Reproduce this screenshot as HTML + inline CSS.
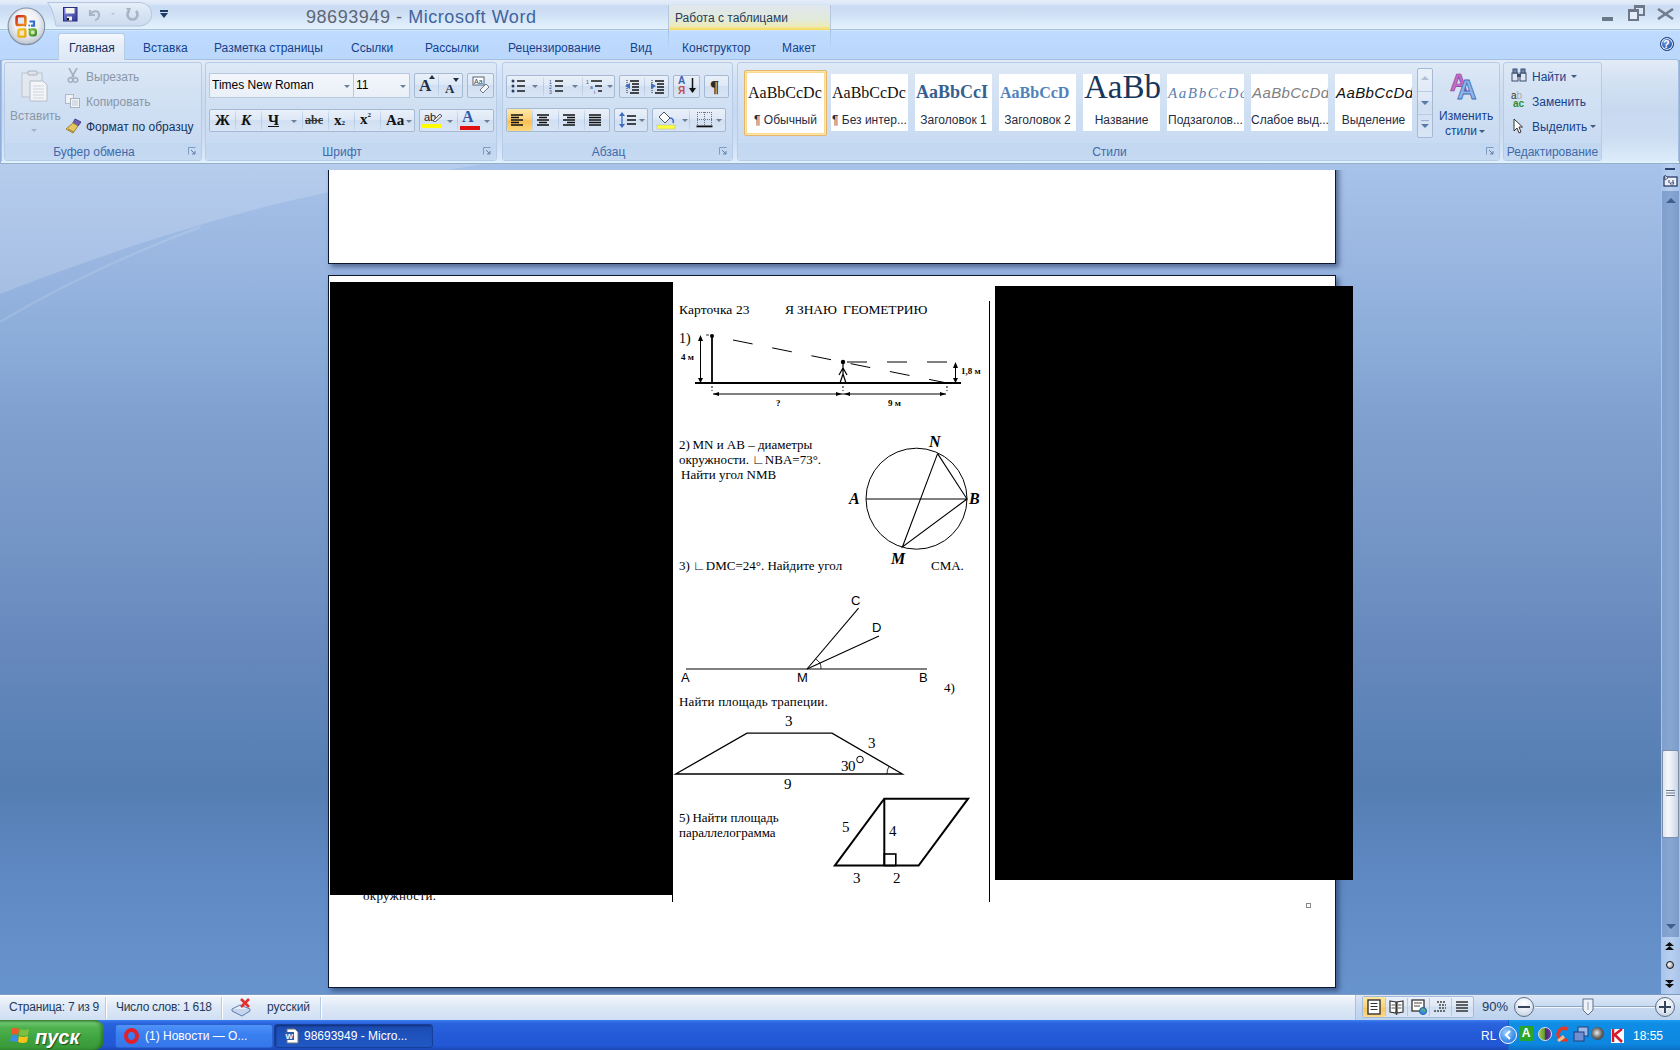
<!DOCTYPE html>
<html><head><meta charset="utf-8">
<style>
*{margin:0;padding:0;box-sizing:border-box}
html,body{width:1680px;height:1050px;overflow:hidden;background:#8fb0dc;font-family:"Liberation Sans",sans-serif}
.a{position:absolute}
.t{position:absolute;white-space:nowrap;color:#15428b;font-size:12px;line-height:14px}
#title{left:0;top:0;width:1680px;height:30px;background:linear-gradient(#e4edf9 0px,#dde8f7 4px,#c9dbf2 6px,#cfe0f5 14px,#dbeafa 22px,#e4f2fd 29px)}
#tabs{left:0;top:30px;width:1680px;height:30px;background:linear-gradient(#bfdbfe,#bad7fc)}
#ribbon{left:1px;top:59px;width:1678px;height:104px;background:linear-gradient(#e3ebf6 0%,#d3e1f3 20%,#c7d9f0 50%,#cddef3 78%,#ddecfa 100%);border:1px solid #a4bfe2;border-radius:3px}
#work{left:0;top:163px;width:1680px;height:832px;background:linear-gradient(#a8c3ea 0%,#9bb8e2 10%,#8fafdb 19%,#82a3d2 29%,#7a9bca 38%,#7193c4 48%,#6889bd 57%,#5d83b8 67%,#557eb3 75%,#5f89c3 86%,#6894ce 100%);overflow:hidden}
#status{left:0;top:995px;width:1680px;height:25px;background:linear-gradient(#f1f6fc 0%,#e0eaf7 40%,#cfdff3 100%);border-top:1px solid #ffffff}
#taskbar{left:0;top:1020px;width:1680px;height:30px;background:linear-gradient(#3d7ff2 0%,#2a64de 10%,#245ad8 50%,#2257d6 85%,#1b47b5 100%)}
.page{position:absolute;background:#fff;border:1px solid #0b1830;box-shadow:3px 3px 5px rgba(30,50,90,.6)}
.blk{position:absolute;background:#000}
.grp{position:absolute;top:62px;height:99px;border:1px solid #b5cbe7;border-radius:3px;background:linear-gradient(#dfe9f6 0%,#d5e3f4 20%,#c9dbf2 80%,#d0e1f5 100%)}
.glab{position:absolute;left:0;right:0;padding-right:18px;bottom:0;height:18px;padding-top:1px;background:linear-gradient(#c2d7f0,#c6daf2);border-top:1px solid #c8dcf2;text-align:center;color:#3e6aaa;font-size:12px;line-height:16px}
.btnbox{position:absolute;border:1px solid #a6b9d3;border-radius:2px;background:linear-gradient(#e9f0f9 0%,#dfe8f6 45%,#d1dff2 50%,#d8e5f5 100%)}
.serif{font-family:"Liberation Serif",serif;color:#000;position:absolute;white-space:nowrap}
</style></head><body>
<div id="title" class="a"></div>
<div id="tabs" class="a"></div>
<div id="ribbon" class="a"></div>
<div id="work" class="a"></div>
<svg class="a" style="left:0;top:163px" width="700" height="200" viewBox="0 0 700 200">
<path d="M0,131 C60,108 200,55 330,29 S520,-5 600,-15 L0,-15 Z" fill="rgba(255,255,255,0.17)"/>
<path d="M0,159 C40,135 100,102 200,64" stroke="rgba(255,255,255,0.12)" stroke-width="2.5" fill="none"/>
</svg>
<div id="status" class="a"></div>
<div id="taskbar" class="a"></div>


<!-- TITLE BAR -->
<div class="a" style="left:0;top:29px;width:1680px;height:1px;background:#a6c1dd"></div>
<div class="a" style="left:0;top:30px;width:1680px;height:1px;background:#d0e6fd"></div>
<!-- QAT pill -->
<svg class="a" style="left:0;top:0" width="170" height="30" viewBox="0 0 170 30"><defs><linearGradient id="qp" x1="0" y1="0" x2="0" y2="1"><stop offset="0" stop-color="#e6eef9"/><stop offset="0.6" stop-color="#d5e2f3"/><stop offset="1" stop-color="#cddbef"/></linearGradient></defs>
<path d="M47.5,2.5 L140,2.5 A11.75,11.75 0 0 1 140,26 L56,26 Q53,8 47.5,2.5 Z" fill="url(#qp)" stroke="#b3c6df" stroke-width="1"/></svg>
<!-- save icon -->
<svg class="a" style="left:63px;top:7px" width="15" height="15" viewBox="0 0 15 15"><defs><linearGradient id="sv" x1="0" y1="0" x2="1" y2="1"><stop offset="0" stop-color="#8a8ee8"/><stop offset="1" stop-color="#2f3590"/></linearGradient></defs><rect x="0.5" y="0.5" width="13.5" height="13.5" fill="url(#sv)" stroke="#2a2f7c"/><rect x="2.5" y="1" width="9" height="5.5" fill="#f6f6e8"/><rect x="4" y="9.5" width="5" height="4" fill="#f0f0f0"/><rect x="4" y="11" width="2" height="2.5" fill="#111"/></svg>
<!-- undo -->
<svg class="a" style="left:87px;top:7px" width="16" height="15" viewBox="0 0 16 15"><path d="M3,3 L3,8 L8,8 M3,8 C6,3 12,3 12,8 C12,11 10,13 8,13" stroke="#a9b6c8" stroke-width="2.2" fill="none"/></svg>
<div class="a" style="left:111px;top:13px;width:0;height:0;border-left:2px solid transparent;border-right:2px solid transparent;border-top:2px solid #b8c3d3"></div>
<svg class="a" style="left:125px;top:7px" width="15" height="15" viewBox="0 0 15 15"><path d="M4,4 A5,5 0 1 0 11,4" stroke="#a9b4c4" stroke-width="2.6" fill="none"/><path d="M1,1 L6,1 L4,6Z" fill="#a9b4c4"/></svg>
<!-- customize arrow -->
<div class="a" style="left:160px;top:10px;width:8px;height:2px;background:#1f3b63"></div>
<div class="a" style="left:160px;top:13px;width:0;height:0;border-left:4px solid transparent;border-right:4px solid transparent;border-top:5px solid #1f3b63"></div>
<!-- office button -->
<svg class="a" style="left:0;top:0" width="52" height="52" viewBox="0 0 52 52">
<defs>
<radialGradient id="ob" cx="50%" cy="40%" r="60%"><stop offset="0" stop-color="#ffffff"/><stop offset="0.55" stop-color="#eef0f4"/><stop offset="0.85" stop-color="#cdd3dc"/><stop offset="1" stop-color="#b9c2ce"/></radialGradient>
<linearGradient id="og" x1="0" y1="0" x2="1" y2="1"><stop offset="0" stop-color="#c8261a"/><stop offset="1" stop-color="#f39a1c"/></linearGradient>
<linearGradient id="yg" x1="0" y1="0" x2="1" y2="1"><stop offset="0" stop-color="#f5c21a"/><stop offset="1" stop-color="#e8a812"/></linearGradient>
<linearGradient id="gg" x1="0" y1="0" x2="1" y2="1"><stop offset="0" stop-color="#7cc04a"/><stop offset="1" stop-color="#3e8a26"/></linearGradient>
</defs>
<circle cx="26.4" cy="26.3" r="18.3" fill="url(#ob)" stroke="#8391a4" stroke-width="1.1"/>
<rect x="16.6" y="16.2" width="8.8" height="8.8" rx="1.6" fill="#dfe8f3" stroke="url(#og)" stroke-width="2.6"/>
<path d="M29.5,21.5 H34 V25.6 H31" fill="none" stroke="#2f6fd0" stroke-width="2.2"/>
<rect x="18.4" y="29.4" width="7" height="7.2" rx="1.4" fill="#f6e6c0" stroke="url(#yg)" stroke-width="2.4"/>
<rect x="29.8" y="29.4" width="6" height="6" rx="1.8" fill="#cfeab0" stroke="url(#gg)" stroke-width="2.4"/>
<circle cx="25.3" cy="25.5" r="0.9" fill="#c85a2a"/><circle cx="29.2" cy="25.5" r="0.9" fill="#2f6fd0"/>
<circle cx="25.3" cy="29.3" r="0.9" fill="#e0a818"/><circle cx="29.2" cy="29.3" r="0.9" fill="#4e9a30"/>
</svg>
<!-- title -->
<div class="t" style="left:306px;top:7px;font-size:18px;line-height:20px;letter-spacing:0.55px;color:#5e6672">98693949 - <span style="color:#3f649e">Microsoft Word</span></div>
<!-- contextual header -->
<div class="a" style="left:668px;top:5px;width:163px;height:25px;background:linear-gradient(#dfe7ef 0%,#e2ead9 60%,#eeebb8 85%,#f7d94a 100%);border-left:1px solid #b5c8de;border-right:1px solid #b5c8de"></div>
<div class="t" style="left:675px;top:11px;color:#283c58">Работа с таблицами</div>
<div class="a" style="left:668px;top:30px;width:1px;height:20px;background:linear-gradient(#a8bedb,rgba(168,190,219,0))"></div>
<div class="a" style="left:830px;top:30px;width:1px;height:20px;background:linear-gradient(#a8bedb,rgba(168,190,219,0))"></div>
<!-- window controls -->
<div class="a" style="left:1602px;top:17px;width:11px;height:4px;background:#6c7889"></div>
<div class="a" style="left:1634px;top:5px;width:11px;height:11px;border:2px solid #6c7889;border-top-width:3px;background:#dbe6f5"></div>
<div class="a" style="left:1628px;top:9px;width:11px;height:12px;border:2px solid #6c7889;border-top-width:3px;background:#e4edf9"></div>
<svg class="a" style="left:1657px;top:8px" width="17" height="12" viewBox="0 0 17 12"><path d="M1,1 L16,11 M16,1 L1,11" stroke="#727e90" stroke-width="2.6"/></svg>
<!-- TABS -->
<div class="a" style="left:58px;top:33px;width:67px;height:27px;border:1px solid #b6cbe6;border-bottom:none;border-radius:3px 3px 0 0;background:linear-gradient(#f4f8fd 0%,#e7eef9 40%,#dde7f5 100%)"></div>
<div class="t" style="left:69px;top:41px;color:#15335e">Главная</div>
<div class="t" style="left:143px;top:41px">Вставка</div>
<div class="t" style="left:214px;top:41px">Разметка страницы</div>
<div class="t" style="left:351px;top:41px">Ссылки</div>
<div class="t" style="left:425px;top:41px">Рассылки</div>
<div class="t" style="left:508px;top:41px">Рецензирование</div>
<div class="t" style="left:630px;top:41px">Вид</div>
<div class="t" style="left:682px;top:41px">Конструктор</div>
<div class="t" style="left:782px;top:41px">Макет</div>
<!-- help -->
<div class="a" style="left:1660px;top:37px;width:14px;height:14px;border-radius:50%;background:radial-gradient(circle at 40% 35%,#6fa0e6,#1d4fa8 70%,#163c82);border:1px solid #1a3a78;box-shadow:0 0 0 1px #fff inset"></div>
<div class="t" style="left:1663px;top:37px;font-size:11px;font-weight:bold;color:#fff">?</div>

<!-- RIBBON -->
<div class="a" style="left:1px;top:161px;width:1678px;height:2px;background:#dff2fb"></div>
<div class="a" style="left:0;top:163px;width:1680px;height:1px;background:#96b0cc"></div>
<div class="grp" style="left:4px;width:198px"><div class="glab">Буфер обмена</div></div>
<svg class="a" style="left:188px;top:147px" width="8" height="8" viewBox="0 0 8 8"><path d="M0.5,7.5 L0.5,0.5 L7.5,0.5" stroke="#7f9bc0" fill="none"/><path d="M3,3 L7,7 M7,4 L7,7 L4,7" stroke="#5e7ea8" fill="none"/></svg>
<svg class="a" style="left:20px;top:69px" width="30" height="33" viewBox="0 0 30 33">
<rect x="2" y="4" width="20" height="24" fill="#e3e8ef" stroke="#b9c3cf"/>
<rect x="8" y="2" width="9" height="4" rx="1" fill="#dfe4ea" stroke="#a9b3bf"/>
<path d="M10,12 L23,12 L27,16 L27,32 L10,32 Z" fill="#f3f5f8" stroke="#b4bdc8"/>
<path d="M13,17 H24 M13,20 H24 M13,23 H24 M13,26 H24 M13,29 H24" stroke="#d0d6de"/>
</svg>
<div class="t" style="left:10px;top:109px;color:#8a97a6">Вставить</div>
<div class="a" style="left:31px;top:129px;width:0;height:0;border-left:3px solid transparent;border-right:3px solid transparent;border-top:3px solid #a7b2c0"></div>
<svg class="a" style="left:67px;top:68px" width="12" height="15" viewBox="0 0 12 15"><path d="M2,0 L7,9 M10,0 L5,9" stroke="#a4afbd" stroke-width="1.6"/><circle cx="3.5" cy="12" r="2.3" fill="none" stroke="#a4afbd" stroke-width="1.5"/><circle cx="8.5" cy="12" r="2.3" fill="none" stroke="#a4afbd" stroke-width="1.5"/></svg>
<div class="t" style="left:86px;top:70px;color:#8a97a6">Вырезать</div>
<svg class="a" style="left:65px;top:94px" width="16" height="14" viewBox="0 0 16 14"><rect x="0.5" y="0.5" width="8" height="9" fill="#eef1f5" stroke="#b0bac6"/><rect x="5.5" y="4.5" width="9" height="9" fill="#f3f5f8" stroke="#a8b2bf"/><path d="M7,7 H13 M7,9 H13 M7,11 H13" stroke="#bcc5cf"/></svg>
<div class="t" style="left:86px;top:95px;color:#8a97a6">Копировать</div>
<svg class="a" style="left:65px;top:118px" width="17" height="16" viewBox="0 0 17 16"><path d="M10,1 L16,4 L13,8 L8,5 Z" fill="#6a5fb2" stroke="#4a3f8a"/><path d="M8,5 L13,8 L8,15 L1,11 Z" fill="#e7c763" stroke="#9d8431"/><path d="M3,11 L9,14" stroke="#9d8431"/></svg>
<div class="t" style="left:86px;top:120px;color:#15335e">Формат по образцу</div>
<div class="grp" style="left:205px;width:292px"><div class="glab">Шрифт</div></div>
<svg class="a" style="left:483px;top:147px" width="8" height="8" viewBox="0 0 8 8"><path d="M0.5,7.5 L0.5,0.5 L7.5,0.5" stroke="#7f9bc0" fill="none"/><path d="M3,3 L7,7 M7,4 L7,7 L4,7" stroke="#5e7ea8" fill="none"/></svg>
<div class="a" style="left:209px;top:73px;width:145px;height:25px;border:1px solid #b6c9e1;background:linear-gradient(#f2f6fb,#eaf0f8)"></div>
<div class="t" style="left:212px;top:78px;color:#000">Times New Roman</div>
<div class="a" style="left:344px;top:85px;width:0;height:0;border-left:3px solid transparent;border-right:3px solid transparent;border-top:3px solid #6b7f99"></div>
<div class="a" style="left:353px;top:73px;width:57px;height:25px;border:1px solid #b6c9e1;background:linear-gradient(#f2f6fb,#eaf0f8)"></div>
<div class="t" style="left:356px;top:78px;color:#000">11</div>
<div class="a" style="left:400px;top:85px;width:0;height:0;border-left:3px solid transparent;border-right:3px solid transparent;border-top:3px solid #6b7f99"></div>
<div class="btnbox" style="left:414px;top:73px;width:49px;height:25px"></div>
<div class="a" style="left:438px;top:75px;width:1px;height:21px;background:linear-gradient(rgba(170,192,222,0.3),#b4c9e4,rgba(170,192,222,0.3))"></div>
<div class="serif" style="left:419px;top:76px;font-size:17px;font-weight:bold;color:#1d2e45">A</div>
<svg class="a" style="left:429px;top:75px" width="6" height="4"><path d="M0,4 L3,0 L6,4Z" fill="#1d2e45"/></svg>
<div class="serif" style="left:445px;top:81px;font-size:13px;font-weight:bold;color:#1d2e45">A</div>
<svg class="a" style="left:453px;top:78px" width="6" height="4"><path d="M0,0 L3,4 L6,0Z" fill="#1d2e45"/></svg>
<div class="btnbox" style="left:467px;top:73px;width:27px;height:25px"></div>
<svg class="a" style="left:472px;top:76px" width="18" height="18" viewBox="0 0 18 18"><rect x="1" y="1" width="11" height="8" fill="#fff" stroke="#55657a"/><text x="2" y="8" font-size="7" font-family="Liberation Sans" fill="#2b3d55">Aa</text><path d="M8,14 L14,8 L17,11 L11,17 Z" fill="#f6f6f6" stroke="#6b7a8e"/></svg>
<div class="btnbox" style="left:209px;top:109px;width:206px;height:23px"></div>
<div class="a" style="left:235px;top:111px;width:1px;height:19px;background:linear-gradient(rgba(170,192,222,0.3),#b4c9e4,rgba(170,192,222,0.3))"></div>
<div class="a" style="left:261px;top:111px;width:1px;height:19px;background:linear-gradient(rgba(170,192,222,0.3),#b4c9e4,rgba(170,192,222,0.3))"></div>
<div class="a" style="left:302px;top:111px;width:1px;height:19px;background:linear-gradient(rgba(170,192,222,0.3),#b4c9e4,rgba(170,192,222,0.3))"></div>
<div class="a" style="left:328px;top:111px;width:1px;height:19px;background:linear-gradient(rgba(170,192,222,0.3),#b4c9e4,rgba(170,192,222,0.3))"></div>
<div class="a" style="left:354px;top:111px;width:1px;height:19px;background:linear-gradient(rgba(170,192,222,0.3),#b4c9e4,rgba(170,192,222,0.3))"></div>
<div class="a" style="left:380px;top:111px;width:1px;height:19px;background:linear-gradient(rgba(170,192,222,0.3),#b4c9e4,rgba(170,192,222,0.3))"></div>
<div class="serif" style="left:215px;top:112px;font-size:15px;font-weight:bold;color:#111">Ж</div>
<div class="serif" style="left:241px;top:112px;font-size:15px;font-weight:bold;font-style:italic;color:#111">К</div>
<div class="serif" style="left:268px;top:112px;font-size:15px;font-weight:bold;color:#111;text-decoration:underline">Ч</div>
<div class="a" style="left:291px;top:120px;width:0;height:0;border-left:3px solid transparent;border-right:3px solid transparent;border-top:3px solid #6b7f99"></div>
<div class="serif" style="left:305px;top:113px;font-size:12px;font-weight:bold;color:#333;text-decoration:line-through">abc</div>
<div class="serif" style="left:334px;top:112px;font-size:15px;font-weight:bold;color:#111">x<span style="font-size:7px">2</span></div>
<div class="serif" style="left:360px;top:111px;font-size:15px;font-weight:bold;color:#111">x<span style="font-size:7px;vertical-align:top">2</span></div>
<div class="serif" style="left:386px;top:112px;font-size:15px;font-weight:bold;color:#111">Aa</div>
<div class="a" style="left:406px;top:120px;width:0;height:0;border-left:3px solid transparent;border-right:3px solid transparent;border-top:3px solid #6b7f99"></div>
<div class="btnbox" style="left:419px;top:109px;width:75px;height:23px"></div>
<div class="a" style="left:457px;top:111px;width:1px;height:19px;background:linear-gradient(rgba(170,192,222,0.3),#b4c9e4,rgba(170,192,222,0.3))"></div>
<div class="t" style="left:424px;top:110px;font-size:11px;color:#222">ab</div>
<svg class="a" style="left:431px;top:112px" width="12" height="10"><path d="M2,9 L9,2 L11,4 L4,10Z" fill="#e8edf5" stroke="#556"/></svg>
<div class="a" style="left:422px;top:124px;width:20px;height:4px;background:#ffff00"></div>
<div class="a" style="left:447px;top:120px;width:0;height:0;border-left:3px solid transparent;border-right:3px solid transparent;border-top:3px solid #6b7f99"></div>
<div class="t" style="left:462px;top:110px;font-size:16px;font-weight:bold;color:#2d57a8;font-family:Liberation Serif">A</div>
<div class="a" style="left:460px;top:126px;width:20px;height:4px;background:#e01010"></div>
<div class="a" style="left:484px;top:120px;width:0;height:0;border-left:3px solid transparent;border-right:3px solid transparent;border-top:3px solid #6b7f99"></div>
<div class="grp" style="left:502px;width:231px"><div class="glab">Абзац</div></div>
<svg class="a" style="left:719px;top:147px" width="8" height="8" viewBox="0 0 8 8"><path d="M0.5,7.5 L0.5,0.5 L7.5,0.5" stroke="#7f9bc0" fill="none"/><path d="M3,3 L7,7 M7,4 L7,7 L4,7" stroke="#5e7ea8" fill="none"/></svg>
<div class="btnbox" style="left:506px;top:75px;width:109px;height:23px"></div>
<div class="a" style="left:543px;top:77px;width:1px;height:19px;background:linear-gradient(rgba(170,192,222,0.3),#b4c9e4,rgba(170,192,222,0.3))"></div>
<div class="a" style="left:582px;top:77px;width:1px;height:19px;background:linear-gradient(rgba(170,192,222,0.3),#b4c9e4,rgba(170,192,222,0.3))"></div>
<svg class="a" style="left:511px;top:79px" width="16" height="15" viewBox="0 0 16 15"><circle cx="2" cy="2" r="1.5" fill="#2a3e5c"/><circle cx="2" cy="7" r="1.5" fill="#2a3e5c"/><circle cx="2" cy="12" r="1.5" fill="#2a3e5c"/><path d="M6,2 H14 M6,7 H14 M6,12 H14" stroke="#1a1a1a" stroke-width="1.4"/></svg>
<div class="a" style="left:532px;top:85px;width:0;height:0;border-left:3px solid transparent;border-right:3px solid transparent;border-top:3px solid #6b7f99"></div>
<svg class="a" style="left:549px;top:79px" width="16" height="15" viewBox="0 0 16 15"><text x="0" y="5" font-size="5" fill="#2c4f8f" font-family="Liberation Sans">1</text><text x="0" y="10" font-size="5" fill="#2c4f8f" font-family="Liberation Sans">2</text><text x="0" y="15" font-size="5" fill="#2c4f8f" font-family="Liberation Sans">3</text><path d="M6,2 H14 M6,7 H14 M6,12 H14" stroke="#1a1a1a" stroke-width="1.4"/></svg>
<div class="a" style="left:572px;top:85px;width:0;height:0;border-left:3px solid transparent;border-right:3px solid transparent;border-top:3px solid #6b7f99"></div>
<svg class="a" style="left:586px;top:79px" width="18" height="15" viewBox="0 0 18 15"><text x="0" y="5" font-size="5" fill="#2c4f8f" font-family="Liberation Sans">1</text><text x="4" y="10" font-size="5" fill="#2c4f8f" font-family="Liberation Sans">a</text><text x="8" y="15" font-size="5" fill="#2c4f8f" font-family="Liberation Sans">i</text><path d="M5,2 H16 M9,7 H16 M12,12 H16" stroke="#1a1a1a" stroke-width="1.4"/></svg>
<div class="a" style="left:607px;top:85px;width:0;height:0;border-left:3px solid transparent;border-right:3px solid transparent;border-top:3px solid #6b7f99"></div>
<div class="btnbox" style="left:619px;top:75px;width:50px;height:23px"></div>
<div class="a" style="left:644px;top:77px;width:1px;height:19px;background:linear-gradient(rgba(170,192,222,0.3),#b4c9e4,rgba(170,192,222,0.3))"></div>
<svg class="a" style="left:624px;top:79px" width="16" height="15" viewBox="0 0 16 15"><path d="M3,1 V14" stroke="#222" stroke-dasharray="1 1" fill="none"/><path d="M6,2 H15 M8,5 H15 M8,8 H15 M8,11 H15 M6,14 H15" stroke="#111" stroke-width="1.3"/><path d="M1,7 L6,4 L6,10Z" fill="#3d6bc0"/></svg>
<svg class="a" style="left:649px;top:79px" width="16" height="15" viewBox="0 0 16 15"><path d="M3,1 V14" stroke="#222" stroke-dasharray="1 1" fill="none"/><path d="M6,2 H15 M8,5 H15 M8,8 H15 M8,11 H15 M6,14 H15" stroke="#111" stroke-width="1.3"/><path d="M7,7 L2,4 L2,10Z" fill="#3d6bc0"/></svg>
<div class="btnbox" style="left:673px;top:75px;width:27px;height:23px"></div>
<div class="t" style="left:678px;top:76px;font-size:10px;line-height:10px;color:#3a62b0;font-weight:bold">A</div>
<div class="t" style="left:678px;top:86px;font-size:10px;line-height:10px;color:#c0504d;font-weight:bold">Я</div>
<svg class="a" style="left:689px;top:78px" width="7" height="16"><path d="M3.5,0 V14" stroke="#111" stroke-width="1.5"/><path d="M0,10 L3.5,15 L7,10Z" fill="#111"/></svg>
<div class="btnbox" style="left:704px;top:75px;width:25px;height:23px"></div>
<div class="serif" style="left:710px;top:77px;font-size:17px;font-weight:bold;color:#2a2a2a">¶</div>
<div class="btnbox" style="left:506px;top:108px;width:104px;height:24px"></div>
<div class="a" style="left:532px;top:110px;width:1px;height:20px;background:linear-gradient(rgba(170,192,222,0.3),#b4c9e4,rgba(170,192,222,0.3))"></div>
<div class="a" style="left:558px;top:110px;width:1px;height:20px;background:linear-gradient(rgba(170,192,222,0.3),#b4c9e4,rgba(170,192,222,0.3))"></div>
<div class="a" style="left:584px;top:110px;width:1px;height:20px;background:linear-gradient(rgba(170,192,222,0.3),#b4c9e4,rgba(170,192,222,0.3))"></div>
<div class="a" style="left:507px;top:109px;width:25px;height:22px;background:linear-gradient(#fde8a6,#fbd27b 45%,#f9bf52 55%,#fcd97f)"></div>
<svg class="a" style="left:511px;top:114px" width="14" height="13"><path d="M0,1.0 H12 M0,3.5 H8 M0,6.0 H12 M0,8.5 H8 M0,11.0 H12 " stroke="#111" stroke-width="1.3"/></svg>
<svg class="a" style="left:537px;top:114px" width="14" height="13"><path d="M0,1.0 H12 M2,3.5 H10 M0,6.0 H12 M2,8.5 H10 M0,11.0 H12 " stroke="#111" stroke-width="1.3"/></svg>
<svg class="a" style="left:563px;top:114px" width="14" height="13"><path d="M0,1.0 H12 M4,3.5 H12 M0,6.0 H12 M4,8.5 H12 M0,11.0 H12 " stroke="#111" stroke-width="1.3"/></svg>
<svg class="a" style="left:589px;top:114px" width="14" height="13"><path d="M0,1.0 H12 M0,3.5 H12 M0,6.0 H12 M0,8.5 H12 M0,11.0 H12 " stroke="#111" stroke-width="1.3"/></svg>
<div class="btnbox" style="left:614px;top:108px;width:34px;height:24px"></div>
<svg class="a" style="left:619px;top:111px" width="18" height="18" viewBox="0 0 18 18"><path d="M3,2 V16" stroke="#3d6bc0" stroke-width="1.3"/><path d="M0,5 L3,1 L6,5Z M0,13 L3,17 L6,13Z" fill="#3d6bc0"/><path d="M8,5 H17 M8,9 H17 M8,13 H17" stroke="#111" stroke-width="1.4"/></svg>
<div class="a" style="left:639px;top:119px;width:0;height:0;border-left:3px solid transparent;border-right:3px solid transparent;border-top:3px solid #6b7f99"></div>
<div class="btnbox" style="left:652px;top:108px;width:74px;height:24px"></div>
<div class="a" style="left:689px;top:110px;width:1px;height:20px;background:linear-gradient(rgba(170,192,222,0.3),#b4c9e4,rgba(170,192,222,0.3))"></div>
<svg class="a" style="left:656px;top:110px" width="22" height="20" viewBox="0 0 22 20"><path d="M8,2 L14,8 L9,13 L3,7 Z" fill="#fff" stroke="#4a5466"/><path d="M14,8 C17,8 18,11 17,13" stroke="#3d6bc0" stroke-width="1.6" fill="none"/><rect x="1" y="15" width="18" height="4" fill="#ffff40" stroke="#b3b38c" stroke-width="0.5"/></svg>
<div class="a" style="left:682px;top:119px;width:0;height:0;border-left:3px solid transparent;border-right:3px solid transparent;border-top:3px solid #6b7f99"></div>
<svg class="a" style="left:696px;top:111px" width="17" height="17" viewBox="0 0 17 17"><rect x="1" y="1" width="1" height="1" fill="#6b7280"/><rect x="1" y="1" width="1" height="1" fill="#6b7280"/><rect x="15" y="1" width="1" height="1" fill="#6b7280"/><rect x="8" y="1" width="1" height="1" fill="#6b7280"/><rect x="1" y="8" width="1" height="1" fill="#6b7280"/><rect x="3" y="1" width="1" height="1" fill="#6b7280"/><rect x="1" y="3" width="1" height="1" fill="#6b7280"/><rect x="15" y="3" width="1" height="1" fill="#6b7280"/><rect x="8" y="3" width="1" height="1" fill="#6b7280"/><rect x="3" y="8" width="1" height="1" fill="#6b7280"/><rect x="5" y="1" width="1" height="1" fill="#6b7280"/><rect x="1" y="5" width="1" height="1" fill="#6b7280"/><rect x="15" y="5" width="1" height="1" fill="#6b7280"/><rect x="8" y="5" width="1" height="1" fill="#6b7280"/><rect x="5" y="8" width="1" height="1" fill="#6b7280"/><rect x="7" y="1" width="1" height="1" fill="#6b7280"/><rect x="1" y="7" width="1" height="1" fill="#6b7280"/><rect x="15" y="7" width="1" height="1" fill="#6b7280"/><rect x="8" y="7" width="1" height="1" fill="#6b7280"/><rect x="7" y="8" width="1" height="1" fill="#6b7280"/><rect x="9" y="1" width="1" height="1" fill="#6b7280"/><rect x="1" y="9" width="1" height="1" fill="#6b7280"/><rect x="15" y="9" width="1" height="1" fill="#6b7280"/><rect x="8" y="9" width="1" height="1" fill="#6b7280"/><rect x="9" y="8" width="1" height="1" fill="#6b7280"/><rect x="11" y="1" width="1" height="1" fill="#6b7280"/><rect x="1" y="11" width="1" height="1" fill="#6b7280"/><rect x="15" y="11" width="1" height="1" fill="#6b7280"/><rect x="8" y="11" width="1" height="1" fill="#6b7280"/><rect x="11" y="8" width="1" height="1" fill="#6b7280"/><rect x="13" y="1" width="1" height="1" fill="#6b7280"/><rect x="1" y="13" width="1" height="1" fill="#6b7280"/><rect x="15" y="13" width="1" height="1" fill="#6b7280"/><rect x="8" y="13" width="1" height="1" fill="#6b7280"/><rect x="13" y="8" width="1" height="1" fill="#6b7280"/><rect x="15" y="1" width="1" height="1" fill="#6b7280"/><rect x="1" y="15" width="1" height="1" fill="#6b7280"/><rect x="15" y="15" width="1" height="1" fill="#6b7280"/><rect x="8" y="15" width="1" height="1" fill="#6b7280"/><rect x="15" y="8" width="1" height="1" fill="#6b7280"/><rect x="0.5" y="14.5" width="16" height="1.8" fill="#111"/></svg>
<div class="a" style="left:716px;top:119px;width:0;height:0;border-left:3px solid transparent;border-right:3px solid transparent;border-top:3px solid #6b7f99"></div>
<div class="grp" style="left:737px;width:763px"><div class="glab">Стили</div></div>
<svg class="a" style="left:1486px;top:147px" width="8" height="8" viewBox="0 0 8 8"><path d="M0.5,7.5 L0.5,0.5 L7.5,0.5" stroke="#7f9bc0" fill="none"/><path d="M3,3 L7,7 M7,4 L7,7 L4,7" stroke="#5e7ea8" fill="none"/></svg>
<div class="a" style="left:744px;top:70px;width:83px;height:66px;border:1px solid #e3b266;border-radius:2px;background:#f8cc6a;box-shadow:0 0 0 1px #fde9b4 inset"></div>
<div class="a" style="left:747px;top:73px;width:77px;height:60px;background:#fff;box-shadow:0 0 2px 1px #fbe0a0"></div>
<div class="a" style="left:747px;top:79px;width:77px;height:28px;overflow:hidden"><div class="t" style="left:1px;top:0;line-height:28px;font-family:Liberation Serif;font-size:16px;color:#111">AaBbCcDc</div></div>
<div class="t" style="left:747px;width:77px;top:113px;text-align:center;color:#1f2c44">¶ Обычный</div>
<div class="a" style="left:831px;top:74px;width:77px;height:57px;background:#fff"></div>
<div class="a" style="left:831px;top:79px;width:77px;height:28px;overflow:hidden"><div class="t" style="left:1px;top:0;line-height:28px;font-family:Liberation Serif;font-size:16px;color:#111">AaBbCcDc</div></div>
<div class="t" style="left:831px;width:77px;top:113px;text-align:center;color:#1f2c44">¶ Без интер...</div>
<div class="a" style="left:915px;top:74px;width:77px;height:57px;background:#fff"></div>
<div class="a" style="left:915px;top:78px;width:77px;height:28px;overflow:hidden"><div class="t" style="left:1px;top:0;line-height:28px;font-family:Liberation Serif;font-size:18px;font-weight:bold;color:#365f91">AaBbCcI</div></div>
<div class="t" style="left:915px;width:77px;top:113px;text-align:center;color:#1f2c44">Заголовок 1</div>
<div class="a" style="left:999px;top:74px;width:77px;height:57px;background:#fff"></div>
<div class="a" style="left:999px;top:79px;width:77px;height:28px;overflow:hidden"><div class="t" style="left:1px;top:0;line-height:28px;font-family:Liberation Serif;font-size:16px;font-weight:bold;color:#4f81bd">AaBbCcD</div></div>
<div class="t" style="left:999px;width:77px;top:113px;text-align:center;color:#1f2c44">Заголовок 2</div>
<div class="a" style="left:1083px;top:74px;width:77px;height:57px;background:#fff"></div>
<div class="a" style="left:1083px;top:73px;width:77px;height:28px;overflow:hidden"><div class="t" style="left:1px;top:0;line-height:28px;font-family:Liberation Serif;font-size:33px;color:#17365d">AaBb</div></div>
<div class="t" style="left:1083px;width:77px;top:113px;text-align:center;color:#1f2c44">Название</div>
<div class="a" style="left:1167px;top:74px;width:77px;height:57px;background:#fff"></div>
<div class="a" style="left:1167px;top:79px;width:77px;height:28px;overflow:hidden"><div class="t" style="left:1px;top:0;line-height:28px;font-family:Liberation Serif;font-size:15px;font-style:italic;color:#5b7fae;letter-spacing:1.6px">AaBbCcDc</div></div>
<div class="t" style="left:1167px;width:77px;top:113px;text-align:center;color:#1f2c44">Подзаголов...</div>
<div class="a" style="left:1251px;top:74px;width:77px;height:57px;background:#fff"></div>
<div class="a" style="left:1251px;top:79px;width:77px;height:28px;overflow:hidden"><div class="t" style="left:1px;top:0;line-height:28px;font-family:Liberation Sans;font-size:15px;font-style:italic;color:#808080;letter-spacing:0.4px">AaBbCcDdE</div></div>
<div class="t" style="left:1251px;width:77px;top:113px;text-align:center;color:#1f2c44">Слабое выд...</div>
<div class="a" style="left:1335px;top:74px;width:77px;height:57px;background:#fff"></div>
<div class="a" style="left:1335px;top:79px;width:77px;height:28px;overflow:hidden"><div class="t" style="left:1px;top:0;line-height:28px;font-family:Liberation Sans;font-size:15px;font-style:italic;color:#111;letter-spacing:0.4px">AaBbCcDdE</div></div>
<div class="t" style="left:1335px;width:77px;top:113px;text-align:center;color:#1f2c44">Выделение</div>
<div class="btnbox" style="left:1417px;top:68px;width:16px;height:70px"></div>
<div class="a" style="left:1418px;top:91px;width:14px;height:1px;background:#b6cbe5"></div>
<div class="a" style="left:1418px;top:114px;width:14px;height:1px;background:#b6cbe5"></div>
<svg class="a" style="left:1421px;top:76px" width="8" height="5"><path d="M0,4 L4,0 L8,4Z" fill="#b3bfcf"/></svg>
<svg class="a" style="left:1421px;top:101px" width="8" height="5"><path d="M0,0 L4,4 L8,0Z" fill="#5a7aa6"/></svg>
<svg class="a" style="left:1421px;top:120px" width="8" height="9"><path d="M0,0 H8" stroke="#5a7aa6"/><path d="M0,4 L4,8 L8,4Z" fill="#5a7aa6"/></svg>
<svg class="a" style="left:1449px;top:70px" width="32" height="30" viewBox="0 0 32 30"><text x="1" y="21" font-size="24" font-weight="bold" font-family="Liberation Sans" fill="#c070c8" stroke="#8a3a96" stroke-width="0.7">A</text><text x="8" y="29" font-size="27" font-weight="bold" font-family="Liberation Sans" fill="#8fb4ea" stroke="#3f6cb4" stroke-width="0.8">A</text></svg>
<div class="t" style="left:1439px;top:109px;color:#15428b">Изменить</div>
<div class="t" style="left:1445px;top:124px;color:#15428b">стили</div>
<div class="a" style="left:1479px;top:130px;width:0;height:0;border-left:3px solid transparent;border-right:3px solid transparent;border-top:3px solid #3d5a80"></div>
<div class="grp" style="left:1503px;width:99px"><div class="glab" style="padding-right:0">Редактирование</div></div>
<svg class="a" style="left:1511px;top:68px" width="16" height="14" viewBox="0 0 16 14"><rect x="1" y="5" width="6" height="8" fill="#dfe6f2" stroke="#3a4d6e"/><rect x="9" y="5" width="6" height="8" fill="#dfe6f2" stroke="#3a4d6e"/><rect x="2" y="1" width="4" height="4" fill="#6e86b3" stroke="#3a4d6e"/><rect x="10" y="1" width="4" height="4" fill="#6e86b3" stroke="#3a4d6e"/><rect x="6" y="6" width="4" height="3" fill="#3a4d6e"/></svg>
<div class="t" style="left:1532px;top:70px">Найти</div>
<div class="a" style="left:1571px;top:75px;width:0;height:0;border-left:3px solid transparent;border-right:3px solid transparent;border-top:3px solid #3d5a80"></div>
<div class="t" style="left:1511px;top:91px;font-size:10px;line-height:10px;color:#333">a<span style="color:#aaa">b</span></div>
<div class="t" style="left:1513px;top:99px;font-size:10px;line-height:10px;color:#2f8f2f;font-weight:bold">ac</div>
<div class="t" style="left:1532px;top:95px">Заменить</div>
<svg class="a" style="left:1513px;top:118px" width="10" height="16" viewBox="0 0 10 16"><path d="M1,1 L1,13 L4,10 L6,15 L8,14 L6,9 L9.5,9 Z" fill="#fff" stroke="#333"/></svg>
<div class="t" style="left:1532px;top:120px">Выделить</div>
<div class="a" style="left:1590px;top:125px;width:0;height:0;border-left:3px solid transparent;border-right:3px solid transparent;border-top:3px solid #3d5a80"></div>
<!-- PAGES -->
<div class="a" style="left:0;top:170px;width:1660px;height:825px;overflow:hidden">
  <div class="page" style="left:328px;top:-20px;width:1008px;height:114px"></div>
  <div class="page" style="left:328px;top:105px;width:1008px;height:713px"></div>
</div>
<div class="serif" style="left:363px;top:888.9px;font-size:13px;line-height:13px;letter-spacing:0.3px">окружности.</div>
<div class="serif" style="left:679px;top:302.6px;font-size:13.5px;line-height:13.5px;letter-spacing:0.1px">Карточка 23</div>
<div class="serif" style="left:785px;top:302.6px;font-size:13.5px;line-height:13.5px;letter-spacing:-0.15px">Я ЗНАЮ&nbsp; ГЕОМЕТРИЮ</div>
<div class="serif" style="left:679px;top:332.3px;font-size:14px;line-height:14px;">1)</div>
<div class="serif" style="left:679px;top:437.9px;font-size:13px;line-height:13px;">2)&thinsp;MN и AB – диаметры</div>
<div class="serif" style="left:679px;top:452.9px;font-size:13px;line-height:13px;">окружности. ∟NBA=73°.</div>
<div class="serif" style="left:681px;top:467.9px;font-size:13px;line-height:13px;">Найти угол NMB</div>
<div class="serif" style="left:679px;top:558.9px;font-size:13px;line-height:13px;">3) ∟DMC=24°. Найдите угол</div>
<div class="serif" style="left:931px;top:558.9px;font-size:13px;line-height:13px;">СМА.</div>
<div class="serif" style="left:944px;top:680.9px;font-size:13px;line-height:13px;">4)</div>
<div class="serif" style="left:679px;top:694.9px;font-size:13px;line-height:13px;letter-spacing:0.2px">Найти площадь трапеции.</div>
<div class="serif" style="left:679px;top:810.9px;font-size:13px;line-height:13px;">5)&thinsp;Найти площадь</div>
<div class="serif" style="left:679px;top:825.9px;font-size:13px;line-height:13px;">параллелограмма</div>
<svg class="a" style="left:670px;top:320px" width="330" height="600" viewBox="670 320 330 600" font-family="Liberation Serif">
<!-- fig 1 -->
<line x1="695" y1="383" x2="961" y2="383" stroke="#000" stroke-width="2"/>
<line x1="712" y1="336" x2="712" y2="383" stroke="#000" stroke-width="1.8"/>
<circle cx="712" cy="336" r="2" fill="#000"/>
<line x1="706" y1="335" x2="709" y2="335" stroke="#000" stroke-width="0.8"/>
<line x1="700.5" y1="337" x2="700.5" y2="382" stroke="#000" stroke-width="1"/>
<path d="M698,341 L700.5,335 L703,341 Z M698,378 L700.5,383 L703,378 Z" fill="#000"/>
<line x1="733" y1="340" x2="947" y2="383" stroke="#000" stroke-width="1" stroke-dasharray="20 20"/>
<line x1="847" y1="362" x2="947" y2="362" stroke="#000" stroke-width="1.2" stroke-dasharray="20 20"/>
<circle cx="843" cy="362" r="2.2" fill="#000"/>
<path d="M843,364 L843,374 M839,375 L843,368 L847,375 M840,383 L843,374 L846,383" stroke="#000" stroke-width="1.2" fill="none"/>
<line x1="955.5" y1="364" x2="955.5" y2="382" stroke="#000" stroke-width="1"/>
<path d="M953,368 L955.5,362 L958,368 Z M953,378 L955.5,383 L958,378 Z" fill="#000"/>
<line x1="712" y1="386" x2="712" y2="391" stroke="#000" stroke-width="1" stroke-dasharray="2 2"/>
<line x1="843" y1="386" x2="843" y2="391" stroke="#000" stroke-width="1" stroke-dasharray="2 2"/>
<line x1="947" y1="386" x2="947" y2="391" stroke="#000" stroke-width="1" stroke-dasharray="2 2"/>
<line x1="713" y1="394" x2="946" y2="394" stroke="#000" stroke-width="1"/>
<path d="M713,394 L719,392 L719,396 Z M842,394 L836,392 L836,396 Z M844,394 L850,392 L850,396 Z M946,394 L940,392 L940,396 Z" fill="#000"/>
<text x="681" y="360" font-size="9" font-weight="bold">4 м</text>
<text x="961" y="374" font-size="9" font-weight="bold">1,8 м</text>
<text x="776" y="406" font-size="9" font-weight="bold">?</text>
<text x="888" y="406" font-size="9" font-weight="bold">9 м</text>
<!-- fig 2 circle -->
<circle cx="916.5" cy="498.7" r="50.5" fill="none" stroke="#000" stroke-width="1"/>
<path d="M866,499 L967,499 M937.6,453.6 L902.4,547 L967,499 L937.6,453.6" stroke="#000" stroke-width="1.1" fill="none"/>
<text x="929" y="447" font-size="16" font-weight="bold" font-style="italic">N</text>
<text x="849" y="504" font-size="16" font-weight="bold" font-style="italic">A</text>
<text x="969" y="504" font-size="16" font-weight="bold" font-style="italic">B</text>
<text x="891" y="564" font-size="16" font-weight="bold" font-style="italic">M</text>
<!-- fig 3 angle -->
<g font-family="Liberation Sans" font-size="13">
<line x1="686" y1="669" x2="927" y2="669" stroke="#000" stroke-width="1.2"/>
<line x1="807" y1="669" x2="858.6" y2="608.2" stroke="#000" stroke-width="1.1"/>
<line x1="807" y1="669" x2="879" y2="636" stroke="#000" stroke-width="1.1"/>
<path d="M815.5,659 A13,13 0 0 1 820,663" stroke="#000" stroke-width="0.8" fill="none"/>
<path d="M820,663 A13,13 0 0 1 821,669" stroke="#000" stroke-width="0.8" fill="none"/>
<text x="851" y="605">C</text>
<text x="872" y="632">D</text>
<text x="681" y="682">A</text>
<text x="797" y="682">M</text>
<text x="919" y="682">B</text>
</g>
<!-- fig 4 trapezoid -->
<path d="M675.7,774 L747,733.2 L832,733.2 L902.4,774 Z" fill="none" stroke="#000" stroke-width="1.3"/>
<path d="M889,766.5 A13,13 0 0 0 887,774" stroke="#000" stroke-width="0.8" fill="none"/>
<text x="785" y="726" font-size="15">3</text>
<text x="868" y="748" font-size="15">3</text>
<text x="841" y="771" font-size="15" letter-spacing="-0.5">30</text>
<circle cx="860" cy="759.5" r="3.3" fill="none" stroke="#000" stroke-width="1"/>
<text x="784" y="789" font-size="15">9</text>
<!-- fig 5 parallelogram -->
<path d="M834.8,865.6 L884.3,798.7 L968.1,798.7 L918.6,865.6 Z" fill="none" stroke="#000" stroke-width="2"/>
<line x1="884.3" y1="798.7" x2="884.3" y2="865.6" stroke="#000" stroke-width="2"/>
<rect x="884.3" y="854" width="11.5" height="11.6" fill="none" stroke="#000" stroke-width="1.6"/>
<text x="842" y="832" font-size="15">5</text>
<text x="889" y="836" font-size="15">4</text>
<text x="853" y="883" font-size="15">3</text>
<text x="893" y="883" font-size="15">2</text>
</svg>
<div class="a" style="left:1306px;top:903px;width:5px;height:5px;border:1px solid #888"></div>

<div class="blk" style="left:330px;top:282px;width:343px;height:613px"></div>
<div class="blk" style="left:995px;top:286px;width:358px;height:594px"></div>
<div class="a" style="left:989px;top:301px;width:1px;height:601px;background:#000"></div>
<div class="a" style="left:672px;top:282px;width:1px;height:620px;background:#000"></div>

<div class="a" style="left:1661px;top:164px;width:19px;height:830px;background:linear-gradient(90deg,#a9c4ea,#b7cff0 50%,#a9c4ea)"></div>
<div class="a" style="left:1665px;top:168px;width:10px;height:2px;background:#2a4570"></div>
<svg class="a" style="left:1663px;top:174px" width="15" height="14" viewBox="0 0 15 14"><rect x="1" y="3" width="13" height="9" fill="#eef0fa" stroke="#2a3e66" stroke-width="1.3"/><path d="M2,1 L5,4 L2,6 Z" fill="#fff" stroke="#2a3e66" stroke-width="0.8"/><path d="M7,9 L9,12 L11,9Z" fill="#fff" stroke="#2a3e66" stroke-width="0.8"/><path d="M6,6 V9 M10,6 V9" stroke="#2a3e66"/></svg>
<div class="a" style="left:1662px;top:191px;width:17px;height:746px;background:linear-gradient(90deg,#7f9fcc,#87a6d2 50%,#7c9cc9)"></div>
<svg class="a" style="left:1666px;top:198px" width="10" height="6"><path d="M0,5 L5,0 L10,5Z" fill="#3f5f8f"/></svg>
<svg class="a" style="left:1666px;top:924px" width="10" height="6"><path d="M0,0 L5,5 L10,0Z" fill="#3f5f8f"/></svg>
<div class="a" style="left:1662px;top:750px;width:17px;height:88px;border:1px solid #7c8ea8;border-radius:2px;background:linear-gradient(90deg,#dfe6f0,#f6f8fb 35%,#e3e9f2 65%,#c9d4e3)"></div>
<svg class="a" style="left:1666px;top:790px" width="9" height="7"><path d="M0,0.5 H9 M0,3 H9 M0,5.5 H9" stroke="#6a7a92"/></svg>
<svg class="a" style="left:1665px;top:942px" width="9" height="9"><path d="M0,4 L4.5,0 L9,4Z M0,8 L4.5,4 L9,8Z" fill="#111"/></svg>
<div class="a" style="left:1666px;top:961px;width:8px;height:8px;border-radius:50%;background:radial-gradient(circle at 35% 35%,#fff,#aaa 70%,#666);border:1px solid #111"></div>
<svg class="a" style="left:1665px;top:980px" width="9" height="9"><path d="M0,0 L4.5,4 L9,0Z M0,4 L4.5,8 L9,4Z" fill="#111"/></svg>
<div class="a" style="left:0;top:994px;width:1680px;height:1px;background:#7a9bc4"></div>
<div class="a" style="left:105px;top:997px;width:1px;height:22px;background:#b7cbe5"></div>
<div class="a" style="left:106px;top:997px;width:1px;height:22px;background:#ffffff"></div>
<div class="a" style="left:221px;top:997px;width:1px;height:22px;background:#b7cbe5"></div>
<div class="a" style="left:222px;top:997px;width:1px;height:22px;background:#ffffff"></div>
<div class="a" style="left:320px;top:997px;width:1px;height:22px;background:#b7cbe5"></div>
<div class="a" style="left:321px;top:997px;width:1px;height:22px;background:#ffffff"></div>
<div class="t" style="left:9px;top:1000px;color:#1e395b;font-size:12px;letter-spacing:-0.2px">Страница: 7 из 9</div>
<div class="t" style="left:116px;top:1000px;color:#1e395b;font-size:12px;letter-spacing:-0.3px">Число слов: 1 618</div>
<svg class="a" style="left:230px;top:997px" width="22" height="20" viewBox="0 0 22 20"><path d="M2,12 L10,8 L20,12 L12,17 Z" fill="#e8eef8" stroke="#5b7bb0"/><path d="M2,12 L2,14 L12,19 L20,14 L20,12" fill="#c6d5ec" stroke="#5b7bb0"/><path d="M11,2 L19,10 M19,2 L11,10" stroke="#e03030" stroke-width="2.6"/></svg>
<div class="t" style="left:267px;top:1000px;color:#1e395b;font-size:12px">русский</div>
<div class="a" style="left:1356px;top:995px;width:324px;height:25px;background:linear-gradient(#dce7f6,#c7d9f0 50%,#bcd2ee)"></div>
<div class="a" style="left:1355px;top:995px;width:1px;height:25px;background:#a9c0de"></div>
<div class="btnbox" style="left:1362px;top:996px;width:112px;height:22px;border-color:#a3bbdc"></div>
<div class="a" style="left:1363px;top:997px;width:22px;height:20px;background:linear-gradient(#fde6a2,#fbd27c 50%,#f8c65c 55%,#fcd98a)"></div>
<div class="a" style="left:1385px;top:998px;width:1px;height:18px;background:#b5c9e3"></div>
<div class="a" style="left:1407px;top:998px;width:1px;height:18px;background:#b5c9e3"></div>
<div class="a" style="left:1429px;top:998px;width:1px;height:18px;background:#b5c9e3"></div>
<div class="a" style="left:1451px;top:998px;width:1px;height:18px;background:#b5c9e3"></div>
<svg class="a" style="left:1367px;top:999px" width="14" height="16" viewBox="0 0 14 16"><rect x="1" y="1" width="12" height="14" fill="#fff" stroke="#333" stroke-width="1.4"/><path d="M3.5,4.5 H10.5 M3.5,7.5 H10.5 M3.5,10.5 H10.5" stroke="#333"/></svg>
<svg class="a" style="left:1389px;top:999px" width="15" height="16" viewBox="0 0 15 16"><path d="M1,2 L7,3 L7,14 L1,13 Z M14,2 L8,3 L8,14 L14,13 Z" fill="#fff" stroke="#333" stroke-width="1.2"/><path d="M2.5,6 H6 M2.5,9 H6 M9,6 H12.5 M9,9 H12.5" stroke="#555"/><path d="M7.5,12 V16" stroke="#444" stroke-width="1.5"/></svg>
<svg class="a" style="left:1411px;top:999px" width="16" height="16" viewBox="0 0 16 16"><rect x="1" y="1" width="12" height="11" fill="#fff" stroke="#333" stroke-width="1.3"/><path d="M3,4 H11 M3,7 H9" stroke="#444"/><circle cx="12" cy="12" r="3.5" fill="#3b8fd8" stroke="#1f5f9e"/><path d="M10,11 Q12,9 14,12" stroke="#5cb85c" fill="none" stroke-width="1.5"/></svg>
<svg class="a" style="left:1433px;top:1000px" width="14" height="14" viewBox="0 0 14 14"><path d="M4,2 H13 M6,5 H13 M6,8 H13 M1,11 H13" stroke="#444" stroke-width="1.3" stroke-dasharray="2 1"/></svg>
<svg class="a" style="left:1455px;top:1000px" width="14" height="14" viewBox="0 0 14 14"><path d="M1,2 H13 M1,5 H13 M1,8 H13 M1,11 H13" stroke="#333" stroke-width="1.6"/></svg>
<div class="t" style="left:1482px;top:1000px;color:#1e395b;font-size:13px">90%</div>
<div class="a" style="left:1535px;top:1006px;width:122px;height:1px;background:#8ea6c6"></div>
<div class="a" style="left:1535px;top:1007px;width:122px;height:1px;background:#f2f6fb"></div>
<div class="a" style="left:1514px;top:997px;width:20px;height:20px;border-radius:50%;border:1px solid #5d6f88;background:radial-gradient(circle at 50% 30%,#ffffff,#e4eaf3 50%,#b9c6d8)"></div>
<div class="a" style="left:1655px;top:997px;width:20px;height:20px;border-radius:50%;border:1px solid #5d6f88;background:radial-gradient(circle at 50% 30%,#ffffff,#e4eaf3 50%,#b9c6d8)"></div>
<div class="a" style="left:1518px;top:1006px;width:12px;height:2px;background:#35445a"></div>
<div class="a" style="left:1659px;top:1006px;width:12px;height:2px;background:#35445a"></div>
<div class="a" style="left:1664px;top:1001px;width:2px;height:12px;background:#35445a"></div>
<svg class="a" style="left:1582px;top:998px" width="12" height="18" viewBox="0 0 12 18"><path d="M1,1 H11 V12 L6,17 L1,12 Z" fill="#eef2f8" stroke="#5d6f88"/><path d="M6,4 V12" stroke="#8aa0bd"/></svg>
<div class="a" style="left:0;top:1020px;width:104px;height:30px;border-radius:0 9px 9px 0;background:linear-gradient(#3c8c3c 0%,#6cc46c 10%,#4fb24f 25%,#3fa43f 60%,#379737 100%);box-shadow:inset -3px 0 3px rgba(0,50,0,.35)"></div>
<svg class="a" style="left:10px;top:1026px" width="20" height="19" viewBox="0 0 20 19"><path d="M1,3 Q4,1 9,3 L8,9 Q4,7 1,9 Z" fill="#f05a28"/><path d="M10,3 Q14,5 19,3 L18,9 Q14,11 9,9 Z" fill="#7ac142"/><path d="M1,10 Q4,8 8,10 L7,16 Q3,14 0,16 Z" fill="#3a8ee6"/><path d="M9,10 Q13,12 18,10 L17,16 Q13,18 8,16 Z" fill="#fbc21a"/></svg>
<div class="t" style="left:35px;top:1026px;font-size:20px;line-height:22px;font-weight:bold;font-style:italic;color:#fff;text-shadow:1px 1px 1px rgba(0,0,0,.5)">пуск</div>
<div class="a" style="left:115px;top:1024px;width:158px;height:24px;border-radius:3px;background:linear-gradient(#4f93f8,#3b80f1 40%,#3577ea);border:1px solid #2a63cf"></div>
<div class="a" style="left:124px;top:1028px;width:15px;height:16px;border-radius:50%;border:4px solid #e0202a;background:transparent"></div>
<div class="t" style="left:145px;top:1029px;color:#fff;font-size:12px">(1) Новости — О...</div>
<div class="a" style="left:274px;top:1024px;width:159px;height:24px;border-radius:3px;background:linear-gradient(#1b4bb0,#1e52bd 50%,#2158c4);border:1px solid #163f9a;box-shadow:inset 1px 1px 2px rgba(0,0,30,.4)"></div>
<svg class="a" style="left:285px;top:1028px" width="15" height="16" viewBox="0 0 15 16"><path d="M2,1 H10 L13,4 V15 H2 Z" fill="#fff" stroke="#777"/><rect x="0" y="4" width="9" height="8" fill="#2a5caa"/><text x="0.5" y="11" font-size="8" font-weight="bold" fill="#fff" font-family="Liberation Sans">W</text></svg>
<div class="t" style="left:304px;top:1029px;color:#fff;font-size:12px">98693949 - Micro...</div>
<div class="t" style="left:1481px;top:1029px;color:#fff;font-size:12px">RL</div>
<div class="a" style="left:1508px;top:1020px;width:172px;height:30px;background:linear-gradient(#1ca0f0 0%,#0f8ee6 10%,#0d87e0 80%,#0b6fc4 100%);border-left:1px solid #1a5fc0"></div>
<div class="a" style="left:1499px;top:1026px;width:18px;height:18px;border-radius:50%;background:radial-gradient(circle at 40% 35%,#9fd0ff,#3c8ee8 60%,#2166c8);border:1px solid #fff"></div>
<svg class="a" style="left:1504px;top:1030px" width="8" height="10"><path d="M6,1 L2,5 L6,9" stroke="#fff" stroke-width="2" fill="none"/></svg>
<div class="a" style="left:1519px;top:1026px;width:14px;height:15px;background:#2aa52a;color:#fff;font-size:12px;font-weight:bold;line-height:15px;text-align:center">A</div>
<div class="a" style="left:1538px;top:1027px;width:14px;height:14px;border-radius:50%;border:1px solid #dde;background:linear-gradient(90deg,#9acb3a 0%,#6a9a30 45%,#4a2a7a 55%,#6a3a9a 100%)"></div>
<svg class="a" style="left:1555px;top:1026px" width="16" height="17" viewBox="0 0 16 17"><path d="M13,3 Q5,0 3,8 Q3,15 13,14" stroke="#e23a2a" stroke-width="3.5" fill="none"/><path d="M2,14 L8,9 L10,12 L4,16Z" fill="#f2c08a"/></svg>
<svg class="a" style="left:1573px;top:1026px" width="16" height="17" viewBox="0 0 16 17"><rect x="5" y="1" width="10" height="9" fill="#9ab8e8" stroke="#233e7a"/><rect x="1" y="6" width="10" height="9" fill="#6f8fd0" stroke="#233e7a"/></svg>
<div class="a" style="left:1591px;top:1027px;width:13px;height:13px;border-radius:50%;background:radial-gradient(circle at 45% 45%,#eee,#666 50%,#222);"></div>
<svg class="a" style="left:1610px;top:1027px" width="15" height="17" viewBox="0 0 15 17"><rect x="1" y="2" width="13" height="14" fill="#fff"/><path d="M3,2 V15 M3,9 L12,2 M5,8 L12,15" stroke="#d8182a" stroke-width="2.5"/></svg>
<div class="t" style="left:1633px;top:1029px;color:#fff;font-size:12px">18:55</div>
</body></html>
